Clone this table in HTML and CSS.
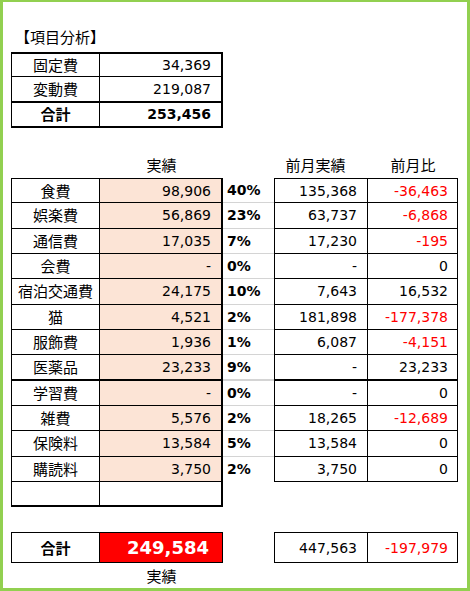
FILE: index.html
```html
<!DOCTYPE html>
<html>
<head>
    <title>項目分析</title>
    <link rel="stylesheet" href="styles.css">
</head>
<body>
    <div class="sheet">
        <p class="title">【項目分析】</p>

        <!-- 固定費 / 変動費 summary -->
        <table class="grid summary">
            <colgroup>
                <col class="c-name">
                <col class="c-actual">
            </colgroup>
            <tr class="first">
                <td class="name">固定費</td>
                <td class="actual plain">34,369</td>
            </tr>
            <tr class="pre-total">
                <td class="name">変動費</td>
                <td class="actual plain">219,087</td>
            </tr>
            <tr class="sum">
                <td class="name bold">合計</td>
                <td class="actual plain bold">253,456</td>
            </tr>
        </table>

        <!-- Detail by category -->
        <table class="grid detail">
            <colgroup>
                <col class="c-name">
                <col class="c-actual">
                <col class="c-pct">
                <col class="c-prev">
                <col class="c-diff">
            </colgroup>
            <tr class="head">
                <td></td>
                <td class="caption">実績</td>
                <td></td>
                <td class="caption shift">前月実績</td>
                <td class="caption">前月比</td>
            </tr>
            <tr class="first">
                <td class="name">食費</td>
                <td class="actual">98,906</td>
                <td class="pct">40%</td>
                <td class="prev">135,368</td>
                <td class="diff neg">-36,463</td>
            </tr>
            <tr>
                <td class="name">娯楽費</td>
                <td class="actual">56,869</td>
                <td class="pct">23%</td>
                <td class="prev">63,737</td>
                <td class="diff neg">-6,868</td>
            </tr>
            <tr>
                <td class="name">通信費</td>
                <td class="actual">17,035</td>
                <td class="pct">7%</td>
                <td class="prev">17,230</td>
                <td class="diff neg">-195</td>
            </tr>
            <tr>
                <td class="name">会費</td>
                <td class="actual">-</td>
                <td class="pct">0%</td>
                <td class="prev">-</td>
                <td class="diff">0</td>
            </tr>
            <tr>
                <td class="name">宿泊交通費</td>
                <td class="actual">24,175</td>
                <td class="pct">10%</td>
                <td class="prev">7,643</td>
                <td class="diff">16,532</td>
            </tr>
            <tr>
                <td class="name">猫</td>
                <td class="actual">4,521</td>
                <td class="pct">2%</td>
                <td class="prev">181,898</td>
                <td class="diff neg">-177,378</td>
            </tr>
            <tr>
                <td class="name">服飾費</td>
                <td class="actual">1,936</td>
                <td class="pct">1%</td>
                <td class="prev">6,087</td>
                <td class="diff neg">-4,151</td>
            </tr>
            <tr class="break">
                <td class="name">医薬品</td>
                <td class="actual">23,233</td>
                <td class="pct">9%</td>
                <td class="prev">-</td>
                <td class="diff">23,233</td>
            </tr>
            <tr>
                <td class="name">学習費</td>
                <td class="actual">-</td>
                <td class="pct">0%</td>
                <td class="prev">-</td>
                <td class="diff">0</td>
            </tr>
            <tr>
                <td class="name">雑費</td>
                <td class="actual">5,576</td>
                <td class="pct">2%</td>
                <td class="prev">18,265</td>
                <td class="diff neg">-12,689</td>
            </tr>
            <tr>
                <td class="name">保険料</td>
                <td class="actual">13,584</td>
                <td class="pct">5%</td>
                <td class="prev">13,584</td>
                <td class="diff">0</td>
            </tr>
            <tr class="last-prev">
                <td class="name">購読料</td>
                <td class="actual">3,750</td>
                <td class="pct">2%</td>
                <td class="prev">3,750</td>
                <td class="diff">0</td>
            </tr>
            <tr class="blank">
                <td class="name"></td>
                <td class="actual plain"></td>
                <td></td>
                <td></td>
                <td></td>
            </tr>
            <tr class="spacer">
                <td colspan="5"></td>
            </tr>
            <tr class="grand">
                <td class="name bold">合計</td>
                <td class="hot">249,584</td>
                <td></td>
                <td class="prev">447,563</td>
                <td class="diff neg">-197,979</td>
            </tr>
            <tr class="head">
                <td></td>
                <td class="caption">実績</td>
                <td></td>
                <td></td>
                <td></td>
            </tr>
        </table>
    </div>
</body>
</html>
```

FILE: styles.css
```css
body {
    margin: 0;
}

.sheet {
    width: 470px;
    height: 591px;
    box-sizing: border-box;
    border: 3px solid #92d050;
    border-top-width: 2px;
    padding-left: 8px;
    background-color: #fff;
    color: #000;
    font-family: "DejaVu Sans", "Noto Sans CJK JP", sans-serif;
    font-size: 14px;
}

.title {
    margin: 22px 0 0;
    padding-left: 4px;
    height: 25px;
    font: 15px/25px "Noto Sans CJK JP", sans-serif;
}

/* spreadsheet-like tables */
.grid {
    border-collapse: separate;
    border-spacing: 0;
    table-layout: fixed;
}

.grid td {
    box-sizing: border-box;
    padding: 0;
    line-height: 18px;
    white-space: nowrap;
    vertical-align: middle;
}

.grid tr {
    height: 25.33px;
}

.c-name { width: 89px; }
.c-actual { width: 123px; }
.c-pct { width: 51px; }
.c-prev { width: 94px; }
.c-diff { width: 90px; }

.summary {
    margin-top: 3px;
    width: 212px;
}

.detail {
    margin-top: 25px;
    width: 447px;
}

.name {
    text-align: center;
    font-family: "Noto Sans CJK JP", sans-serif;
    font-size: 15px;
    border-left: 1px solid #000;
    border-right: 1px solid #000;
    border-bottom: 1px solid #000;
}

.actual {
    text-align: right;
    padding-right: 10px !important;
    background-color: #fce4d6;
    border-right: 2px solid #000;
    border-bottom: 1px solid #000;
}

.actual.plain {
    background-color: #fff;
}

.bold {
    font-weight: bold;
}

.pct {
    padding-left: 4px !important;
    font-weight: bold;
    border-bottom: 1px solid #d4d4d4;
}

.prev {
    text-align: right;
    padding-right: 10px !important;
    border-left: 1px solid #000;
    border-right: 1px solid #000;
    border-bottom: 1px solid #000;
}

.diff {
    text-align: right;
    padding-right: 9px !important;
    border-right: 1px solid #000;
    border-bottom: 1px solid #000;
}

.neg {
    color: #ff0000;
}

.first td {
    border-top: 1px solid #000;
}

.first .pct {
    border-top: none;
}

/* summary borders */
.summary .first td {
    border-top-width: 2px;
}

.summary .pre-total td {
    border-bottom-width: 2px;
}

.summary .sum td {
    border-bottom-width: 2px;
}

.break td {
    border-bottom-width: 2px;
}

.last-prev .pct {
    border-bottom: none;
}

.blank td {
    border-bottom-width: 2px;
}

.head {
    height: 25px !important;
}

.caption {
    text-align: center;
    font-family: "Noto Sans CJK JP", sans-serif;
    font-size: 15px;
}

.caption.shift {
    padding-right: 11px !important;
}

.spacer {
    height: 25px !important;
}

.grand {
    height: 31px !important;
}

.grand td.name,
.grand td.hot,
.grand td.prev,
.grand td.diff {
    border-top: 1px solid #000;
}

.hot {
    text-align: right;
    padding-right: 13px !important;
    background-color: #ff0000;
    color: #fff;
    font-size: 18px;
    font-weight: bold;
    border-right: 1px solid #000;
    border-bottom: 1px solid #000;
}
```
